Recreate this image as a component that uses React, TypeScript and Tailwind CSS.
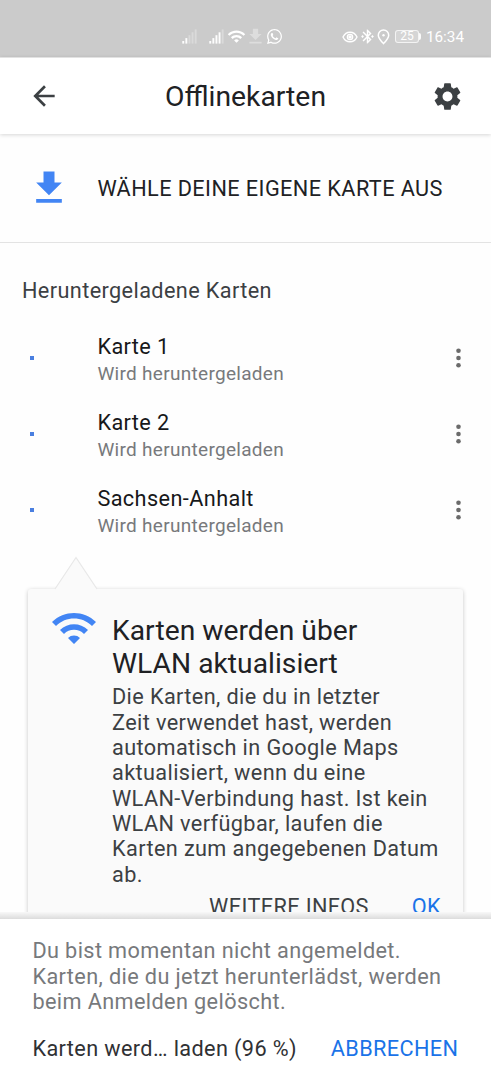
import { MdArrowBack, MdBluetoothConnected, MdSettings, MdWifi } from "react-icons/md";
import { FaWhatsapp } from "react-icons/fa";

const maps = ["Karte 1", "Karte 2", "Sachsen-Anhalt"];

function Signal({ active }: { active: number }) {
  return (
    <svg width="16" height="16" viewBox="0 0 16 16" fill="#fff">
      {[0, 1, 2, 3, 4].map(i => (
        <rect
          key={i}
          x={0.3 + i * 3.1}
          y={12 - i * 2.9}
          width="1.9"
          height={2.6 + i * 2.9}
          opacity={i < active ? 0.95 : 0.3}
        />
      ))}
    </svg>
  );
}

function DownloadIcon({ size, color }: { size: number; color: string }) {
  return (
    <svg width={size} height={size} viewBox="0 0 24 24" fill={color}>
      <path d="M19 9h-4V3H9v6H5l7 7 7-7zM5 18v2h14v-2H5z" />
    </svg>
  );
}

function StatusBar() {
  return (
    <div className="h-[57px] shrink-0 bg-[#cbcbcb] pt-[15px] flex justify-between pl-[182px] pr-[27px] text-white">
      <div className="flex items-center h-[43px]">
        <Signal active={2} />
        <div className="ml-[11px]">
          <Signal active={4} />
        </div>
        <MdWifi size={19} className="ml-[2px]" />
        <div className="opacity-35 ml-[-1px]">
          <DownloadIcon size={21} color="#fff" />
        </div>
        <FaWhatsapp size={17} className="ml-0" />
      </div>
      <div className="flex items-center h-[43px]">
        <svg width="16" height="16" viewBox="0 0 16 16" fill="none" stroke="#fff" strokeWidth="1.4">
          <path d="M1 8c3-6.4 11-6.4 14 0-3 6.4-11 6.4-14 0z" />
          <circle cx="8" cy="8" r="2.6" />
          <circle cx="8" cy="8" r="1" fill="#fff" />
        </svg>
        <MdBluetoothConnected size={17} className="ml-px" />
        <svg width="13" height="16" viewBox="0 0 13 16" fill="none" stroke="#fff" strokeWidth="1.5" className="ml-px">
          <path d="M6.5 14.6C3.5 11.5 1.3 8.8 1.3 6.2a5.2 5.2 0 0 1 10.4 0c0 2.6-2.2 5.3-5.2 8.4z" />
          <circle cx="6.5" cy="6.2" r="1.2" fill="#fff" stroke="none" />
        </svg>
        <div className="ml-[5px] w-[24px] h-[13px] border border-white/70 rounded-[3px] bg-white/20 text-[12px] leading-[11px] text-center">
          25
        </div>
        <div className="w-[2px] h-[7px] bg-white/90 rounded-r-sm" />
        <span className="ml-[5px] text-[15.3px] leading-[18px]">16:34</span>
      </div>
    </div>
  );
}

function MapRow({ name }: { name: string }) {
  return (
    <div className="h-[76px] flex items-center pl-[30px] pr-[30px]">
      <div className="w-[4px] h-[4px] bg-[#4a7fe0]" />
      <div className="ml-[63.4px] flex-1 pt-[4px]">
        <div className="text-[21.7px] leading-[26px] tracking-[0.4px] text-[#17181a]">{name}</div>
        <div className="mt-[2px] text-[19px] leading-[24px] tracking-[0.3px] text-[#77797c]">Wird heruntergeladen</div>
      </div>
      <svg width="5" height="20" viewBox="0 0 5 20" fill="#6b6b6b">
        <circle cx="2.5" cy="2.8" r="2.3" />
        <circle cx="2.5" cy="10" r="2.3" />
        <circle cx="2.5" cy="17.2" r="2.3" />
      </svg>
    </div>
  );
}

export default function App() {
  return (
    <main className="w-[491px] h-[1080px] flex flex-col overflow-hidden bg-[#fefefe] font-[Roboto,sans-serif]">
      <StatusBar />

      <header className="h-[77px] shrink-0 flex items-center justify-between pl-[28px] pr-[27px] border-t border-[#e2e2e2] bg-white shadow-[0_1px_4px_rgba(0,0,0,0.16)]">
        <MdArrowBack size={32} color="#3c4043" />
        <h1 className="text-[28.3px] leading-[33px] text-[#202124]">Offlinekarten</h1>
        <MdSettings size={33} color="#3c4043" />
      </header>

      <div className="h-[778px] shrink-0 overflow-hidden">
        <div className="h-[109px] flex items-center pl-[27px] border-b border-[#e3e3e3]">
          <DownloadIcon size={44} color="#4285f4" />
          <span className="ml-[26.4px] pt-[2px] text-[21.7px] leading-[26px] tracking-[0.42px] text-[#202124]">
            WÄHLE DEINE EIGENE KARTE AUS
          </span>
        </div>

        <h2 className="pt-[35px] h-[77px] pl-[22px] text-[21.7px] leading-[25px] tracking-[0.38px] text-[#3c4043]">
          Heruntergeladene Karten
        </h2>
        {maps.map(name => (
          <MapRow key={name} name={name} />
        ))}

        {/* Wi-Fi hint with its pointer */}
        <section className="relative mt-[41px] ml-[28px] w-[435px] h-[370px] rounded-[3px] bg-[#fafafa] shadow-[0_1px_4px_rgba(0,0,0,0.22)] flex pl-[22px] pt-[25px]">
          <svg width="46" height="34" viewBox="0 0 46 34" className="absolute left-[24.5px] top-[-33px]">
            <path d="M2 33L23 1.5L44 33V34H2z" fill="#fafafa" />
            <path d="M2 33L23 1.5L44 33" fill="none" stroke="#e8e8e8" strokeWidth="1.2" />
          </svg>
          <MdWifi size={48} color="#4285f4" className="shrink-0 -mt-[10px]" />
          <div className="ml-[14px] w-[330px]">
            <h3 className="text-[28.2px] leading-[33px] tracking-[0.04px] text-[#202124]">
              Karten werden über<br />WLAN aktualisiert
            </h3>
            <p className="mt-[4.4px] text-[21.7px] leading-[25.35px] tracking-[0.38px] text-[#3c4043] whitespace-nowrap">
              Die Karten, die du in letzter<br />
              Zeit verwendet hast, werden<br />
              automatisch in Google Maps<br />
              aktualisiert, wenn du eine<br />
              WLAN-Verbindung hast. Ist kein<br />
              WLAN verfügbar, laufen die<br />
              Karten zum angegebenen Datum<br />
              ab.
            </p>
            <div className="mt-[6.6px] flex justify-end gap-[43px] pr-px text-[21.7px] leading-[25px] tracking-[0.38px]">
              <button className="text-[#3c4043]">WEITERE INFOS</button>
              <button className="text-[#1a73e8]">OK</button>
            </div>
          </div>
        </section>
      </div>

      <div className="h-[7px] shrink-0 bg-linear-to-b from-[#f8f8f8] to-[#dcdcdc]" />

      <footer className="flex-1 bg-white pl-[32.4px] pr-[32.6px] pt-[19.4px]">
        <p className="text-[21.7px] leading-[25.35px] tracking-[0.38px] text-[#77797c] whitespace-nowrap">
          Du bist momentan nicht angemeldet.<br />
          Karten, die du jetzt herunterlädst, werden<br />
          beim Anmelden gelöscht.
        </p>
        <div className="mt-[21.6px] flex justify-between text-[21.7px] leading-[26px] tracking-[0.38px] whitespace-nowrap">
          <span className="text-[#303134]">Karten werd… laden (96 %)</span>
          <button className="text-[#1a73e8]">ABBRECHEN</button>
        </div>
      </footer>
    </main>
  );
}
